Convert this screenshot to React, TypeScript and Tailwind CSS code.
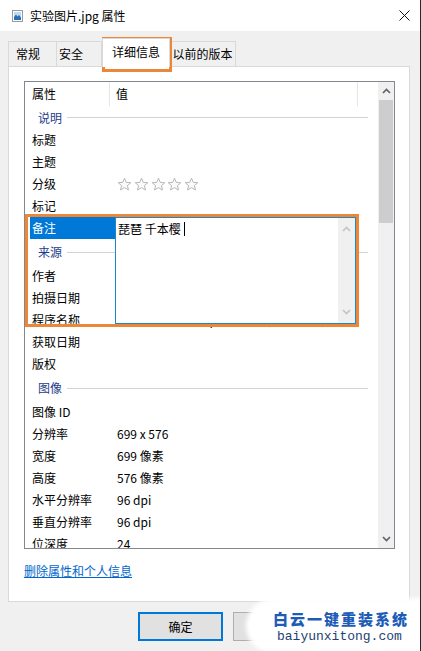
import React from 'react';

type Row = { k: string; v?: string; group?: boolean; stars?: boolean; selected?: boolean; h?: string };

const rows: Row[] = [
  { k: '说明', group: true, h: 'h-[23px]' },
  { k: '标题' },
  { k: '主题' },
  { k: '分级', stars: true },
  { k: '标记' },
  { k: '备注', selected: true },
  { k: '来源', group: true, h: 'h-[26px]' },
  { k: '作者' },
  { k: '拍摄日期' },
  { k: '程序名称', v: 'Adobe Photoshop CC 2018 (Windows)' },
  { k: '获取日期' },
  { k: '版权' },
  { k: '图像', group: true, h: 'h-[26px]' },
  { k: '图像 ID' },
  { k: '分辨率', v: '699 x 576' },
  { k: '宽度', v: '699 像素' },
  { k: '高度', v: '576 像素' },
  { k: '水平分辨率', v: '96 dpi' },
  { k: '垂直分辨率', v: '96 dpi' },
  { k: '位深度', v: '24' },
];

const StarIcon = () => (
  <svg width="15" height="15" viewBox="0 0 15 15">
    <path
      d="M7.5 1.2 L9.3 5.4 L13.8 5.7 L10.4 8.6 L11.5 13 L7.5 10.6 L3.5 13 L4.6 8.6 L1.2 5.7 L5.7 5.4 Z"
      fill="#fafafa"
      stroke="#b8b8b8"
      strokeWidth="1"
      strokeLinejoin="round"
    />
  </svg>
);

const Chevron = ({ up, color = '#606060' }: { up?: boolean; color?: string }) => (
  <svg width="9" height="6" viewBox="0 0 9 6">
    <path d={up ? 'M1 5 L4.5 1.5 L8 5' : 'M1 1 L4.5 4.5 L8 1'} fill="none" stroke={color} strokeWidth="1.6" />
  </svg>
);

const PicIcon = () => (
  <svg width="11" height="12" viewBox="0 0 11 12">
    <rect x="0.5" y="0.5" width="10" height="11" fill="#fff" stroke="#9a9a9a" />
    <rect x="2" y="2" width="7" height="8" fill="#bcdcf4" />
    <path d="M2 10 L2 7 L4 4.5 L5.5 6.5 L7 5 L9 7.5 L9 10 Z" fill="#2a6fb8" />
  </svg>
);

export default function App() {
  return (
    <div className="relative w-[421px] h-[651px] overflow-hidden bg-[#f0f0f0] border-r border-[#2b2b2b] text-[12px] text-black font-['Noto_Sans_CJK_SC','Noto_Sans',sans-serif]">
      {/* 标题栏 */}
      <div className="h-[31px] bg-white flex items-center pl-[12px] pr-[10px]">
        <PicIcon />
        <span className="ml-[7px] leading-none">实验图片.jpg 属性</span>
        <svg className="ml-auto" width="11" height="11" viewBox="0 0 11 11">
          <path d="M0.5 0.5 L10.5 10.5 M10.5 0.5 L0.5 10.5" stroke="#111" strokeWidth="1" />
        </svg>
      </div>

      {/* 选项卡 */}
      <div className="h-[35px] flex items-end pl-[8px]">
        <div className="w-[49px] h-[25px] border border-b-0 border-[#d9d9d9] flex items-center pl-[7px]">常规</div>
        <div className="w-[45px] h-[25px] border border-l-0 border-b-0 border-[#d9d9d9] flex items-center pl-[2px]">安全</div>
        <div className="relative z-10 -mb-px w-[68px] h-[29px] border border-b-0 border-[#d9d9d9] bg-white flex items-center justify-center pb-[2px]">
          详细信息
        </div>
        <div className="w-[66px] h-[25px] border border-l-0 border-b-0 border-[#d9d9d9] flex items-center justify-center">以前的版本</div>
      </div>

      {/* 面板 */}
      <div className="ml-[8px] w-[402px] h-[536px] border border-[#d9d9d9] bg-white pt-[14px] pl-[15px]">
        <div className="w-[371px] h-[468px] border border-[#828790] flex">
          <div className="w-[353px] overflow-hidden">
            <div className="h-[24px] flex">
              <div className="w-[85px] border-r border-[#e5e5e5] flex items-center pl-[7px]">属性</div>
              <div className="w-[248px] border-r border-[#e5e5e5] flex items-center pl-[6px]">值</div>
            </div>
            {rows.map((r) =>
              r.group ? (
                <div key={r.k} className={`${r.h} flex items-center pl-[13px] pr-[10px]`}>
                  <span className="text-[#1e3c8c]">{r.k}</span>
                  <div className="flex-1 h-px bg-[#cfd3da] ml-[5px]" />
                </div>
              ) : r.selected ? (
                <div key={r.k} className="h-[22px] flex">
                  <div className="ml-[5px] w-[328px] bg-[#0078d7] text-white flex items-center pl-[2px]">{r.k}</div>
                </div>
              ) : (
                <div key={r.k} className="h-[22px] flex items-center whitespace-nowrap">
                  <div className="w-[85px] pl-[7px]">{r.k}</div>
                  {r.stars ? (
                    <div className="pl-[7px] flex gap-[1.75px]">
                      <StarIcon />
                      <StarIcon />
                      <StarIcon />
                      <StarIcon />
                      <StarIcon />
                    </div>
                  ) : (
                    <div className="pl-[7px]">{r.v}</div>
                  )}
                </div>
              )
            )}
          </div>
          {/* 滚动条 */}
          <div className="w-[16px] bg-[#f0f0f0] flex flex-col">
            <div className="h-[18px] flex items-center justify-center">
              <Chevron up />
            </div>
            <div className="h-[123px] bg-[#cdcdcd] mx-px" />
            <div className="flex-1" />
            <div className="h-[18px] flex items-center justify-center">
              <Chevron />
            </div>
          </div>
        </div>
        <div className="mt-[14px] leading-[16px]">
          <span className="text-[#0066cc] underline">删除属性和个人信息</span>
        </div>
      </div>

      {/* 按钮 */}
      <div className="flex pl-[138px] pt-[10px] gap-[10px]">
        <div className="w-[85px] h-[29px] border-2 border-[#0078d7] bg-[#e1e1e1] flex items-center justify-center">确定</div>
        <div className="w-[85px] h-[29px] border border-[#adadad] bg-[#e1e1e1]" />
      </div>

      {/* 备注编辑框 */}
      <div className="absolute left-[115px] top-[217px] w-[241px] h-[107px] border border-[#1e88c0] bg-white flex">
        <div className="flex-1 h-[21px] flex items-center pl-[2px]">
          <span>琵琶 千本樱</span>
          <span className="ml-[3px] w-px h-[14px] bg-black" />
        </div>
        <div className="w-[17px] bg-[#f0f0f0] flex flex-col justify-between py-[8px] items-center">
          <Chevron up color="#c4c4c4" />
          <Chevron color="#c4c4c4" />
        </div>
      </div>

      {/* 高亮框 */}
      <div className="absolute left-[102px] top-[37px] w-[70px] h-[35px] border-[3px] border-[#ec8737]" />
      <div className="absolute left-[25px] top-[214px] w-[334px] h-[113px] border-[3px] border-[#ec8737]" />

      {/* 水印 */}
      <div className="absolute left-[246px] top-[598px] w-[180px] h-[56px]">
        <div className="absolute inset-0 bg-white rounded-tl-[28px] rounded-bl-[28px] blur-[2px]" />
        <div className="absolute left-[34px] -top-[4px] w-0 h-0 border-l-[10px] border-r-[10px] border-b-[12px] border-l-transparent border-r-transparent border-b-white" />
        <div className="absolute left-[27px] top-[12px] text-[15px] leading-[18px] font-black tracking-[2px] text-[#1d5cb6] whitespace-nowrap">
          白云一键重装系统
        </div>
        <div className="absolute left-[31px] top-[31px] text-[13px] leading-[16px] text-[#1e3f75] font-['Liberation_Mono',monospace] whitespace-nowrap">
          baiyunxitong.com
        </div>
      </div>
    </div>
  );
}
